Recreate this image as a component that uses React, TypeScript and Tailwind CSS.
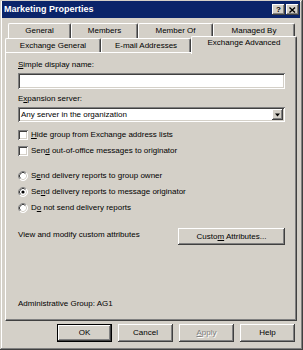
import type { ReactNode } from "react";

const raised =
  "bg-[#d4d0c8] shadow-[inset_-1px_-1px_#404040,inset_1px_1px_#ffffff,inset_-2px_-2px_#808080,inset_2px_2px_#d4d0c8]";
const sunken =
  "bg-white shadow-[inset_1px_1px_#808080,inset_-1px_-1px_#ffffff,inset_2px_2px_#404040,inset_-2px_-2px_#d4d0c8]";

const Tab = ({ label, w, h = "h-[15px]" }: { label: string; w: string; h?: string }) => (
  <div
    className={`${w} ${h} flex items-center justify-center rounded-t-[2px] border-t border-l border-white border-r border-r-[#404040] shadow-[inset_-1px_0_#808080] leading-none`}
  >
    {label}
  </div>
);

const CheckBox = ({ children }: { children: ReactNode }) => (
  <div className="flex items-center h-[10px]">
    <div className={`w-[10px] h-[10px] ${sunken}`} />
    <span className="ml-[3px] leading-none">{children}</span>
  </div>
);

const Radio = ({ checked, children }: { checked?: boolean; children: ReactNode }) => (
  <div className="flex items-center h-[10px]">
    <svg width="10" height="10" viewBox="0 0 10 10">
      <circle cx="5" cy="5" r="4.5" fill="#ffffff" />
      <path d="M1.8 8.2 A4.5 4.5 0 0 1 8.2 1.8" stroke="#808080" strokeWidth="1" fill="none" />
      <path d="M2.5 7.5 A3.5 3.5 0 0 1 7.5 2.5" stroke="#404040" strokeWidth="1" fill="none" />
      <path d="M8.2 1.8 A4.5 4.5 0 0 1 1.8 8.2" stroke="#ffffff" strokeWidth="1" fill="none" />
      <path d="M7.5 2.5 A3.5 3.5 0 0 1 2.5 7.5" stroke="#d4d0c8" strokeWidth="1" fill="none" />
      {checked && <circle cx="5" cy="5" r="1.6" fill="#000000" />}
    </svg>
    <span className="ml-[3px] leading-none">{children}</span>
  </div>
);

const Button = ({ children, def, disabled }: { children: ReactNode; def?: boolean; disabled?: boolean }) => (
  <div className={`w-[55px] h-[18px] ${def ? "border border-black" : ""} flex`}>
    <div
      className={`flex-1 flex items-center justify-center ${raised} ${
        disabled ? "text-[#808080] [text-shadow:1px_1px_#ffffff]" : ""
      }`}
    >
      <span>{children}</span>
    </div>
  </div>
);

export default function App() {
  return (
    <div className="w-[303px] h-[350px] bg-[#d4d0c8] pt-[1px] pl-[2px] pr-[3px] font-['Liberation_Sans',Arial,sans-serif] text-[8px] text-black shadow-[inset_-1px_-1px_#404040,inset_1px_1px_#d4d0c8,inset_-2px_-2px_#808080,inset_2px_2px_#ffffff] overflow-hidden">
      {/* title bar */}
      <div className="h-[17px] bg-[#0a246a] flex items-center pl-[2px] pr-[1px]">
        <span className="text-white font-bold text-[9px] leading-none">Marketing Properties</span>
        <div className="ml-auto flex gap-[1px]">
          <div className={`w-[13px] h-[11px] ${raised} flex items-center justify-center font-bold text-[8px] leading-none`}>
            ?
          </div>
          <div className={`w-[13px] h-[11px] ${raised} flex items-center justify-center`}>
            <svg width="7" height="6" viewBox="0 0 7 6">
              <path d="M0.5 0.5 L6 5.5 M6 0.5 L0.5 5.5" stroke="#000" strokeWidth="1.4" />
            </svg>
          </div>
        </div>
      </div>

      <div className="ml-[3px] w-[292px]">
        {/* tabs */}
        <div className="mt-[5px] flex flex-col">
          <div className="flex pl-[3px]">
            <Tab label="General" w="w-[63px]" />
            <Tab label="Members" w="w-[67px]" />
            <Tab label="Member Of" w="w-[75px]" />
            <Tab label="Managed By" w="w-[82px]" />
          </div>
          <div className="flex items-end h-[14px]">
            <Tab label="Exchange General" w="w-[96px]" h="h-[14px]" />
            <Tab label="E-mail Addresses" w="w-[90px]" h="h-[14px]" />
            <div className="relative z-10 -mb-[2px] w-[106px] h-[18px] bg-[#d4d0c8] flex justify-center pt-[2px] rounded-t-[2px] border-t border-l border-white border-r border-r-[#404040] shadow-[inset_-1px_0_#808080] leading-none">
              Exchange Advanced
            </div>
          </div>
        </div>

        {/* panel */}
        <div className="w-[292px] h-[269px] border-t border-l border-white border-r border-b border-r-[#404040] border-b-[#404040] shadow-[inset_-1px_-1px_#808080] flex flex-col pl-[12px] pr-[11px] pt-[7px] pb-[11px]">
          <div className="leading-[10px] h-[10px]">
            <u>S</u>imple display name:
          </div>
          <div className={`mt-[3px] h-[16px] ${sunken}`} />
          <div className="mt-[5px] leading-[10px] h-[10px]">
            E<u>x</u>pansion server:
          </div>
          <div className={`mt-[3px] h-[15px] ${sunken} flex items-center pl-[3px] pr-[2px]`}>
            <span className="leading-none">Any server in the organization</span>
            <div className={`ml-auto w-[11px] h-[11px] ${raised} flex items-center justify-center`}>
              <svg width="5" height="4" viewBox="0 0 5 4">
                <path d="M0 0.5 H5 L2.5 3.5 Z" fill="#000" />
              </svg>
            </div>
          </div>
          <div className="mt-[8px]">
            <CheckBox>
              <u>H</u>ide group from Exchange address lists
            </CheckBox>
          </div>
          <div className="mt-[6px]">
            <CheckBox>
              Sen<u>d</u> out-of-office messages to originator
            </CheckBox>
          </div>
          <div className="mt-[15px] flex flex-col gap-[6px]">
            <Radio>
              S<u>e</u>nd delivery reports to group owner
            </Radio>
            <Radio checked>
              Se<u>n</u>d delivery reports to message originator
            </Radio>
            <Radio>
              D<u>o</u> not send delivery reports
            </Radio>
          </div>
          <div className="mt-[15px] flex items-center">
            <span className="leading-none -mt-[3px]">View and modify custom attributes</span>
            <div className={`ml-auto w-[107px] h-[17px] ${raised} flex items-center justify-center`}>
              <span>
                Custo<u>m</u> Attributes...
              </span>
            </div>
          </div>
          <div className="mt-auto leading-[10px]">Administrative Group: AG1</div>
        </div>

        {/* buttons */}
        <div className="mt-[3px] flex justify-end gap-[6px] pr-[2px]">
          <Button def>OK</Button>
          <Button>Cancel</Button>
          <Button disabled>
            <u>A</u>pply
          </Button>
          <Button>Help</Button>
        </div>
      </div>
    </div>
  );
}
